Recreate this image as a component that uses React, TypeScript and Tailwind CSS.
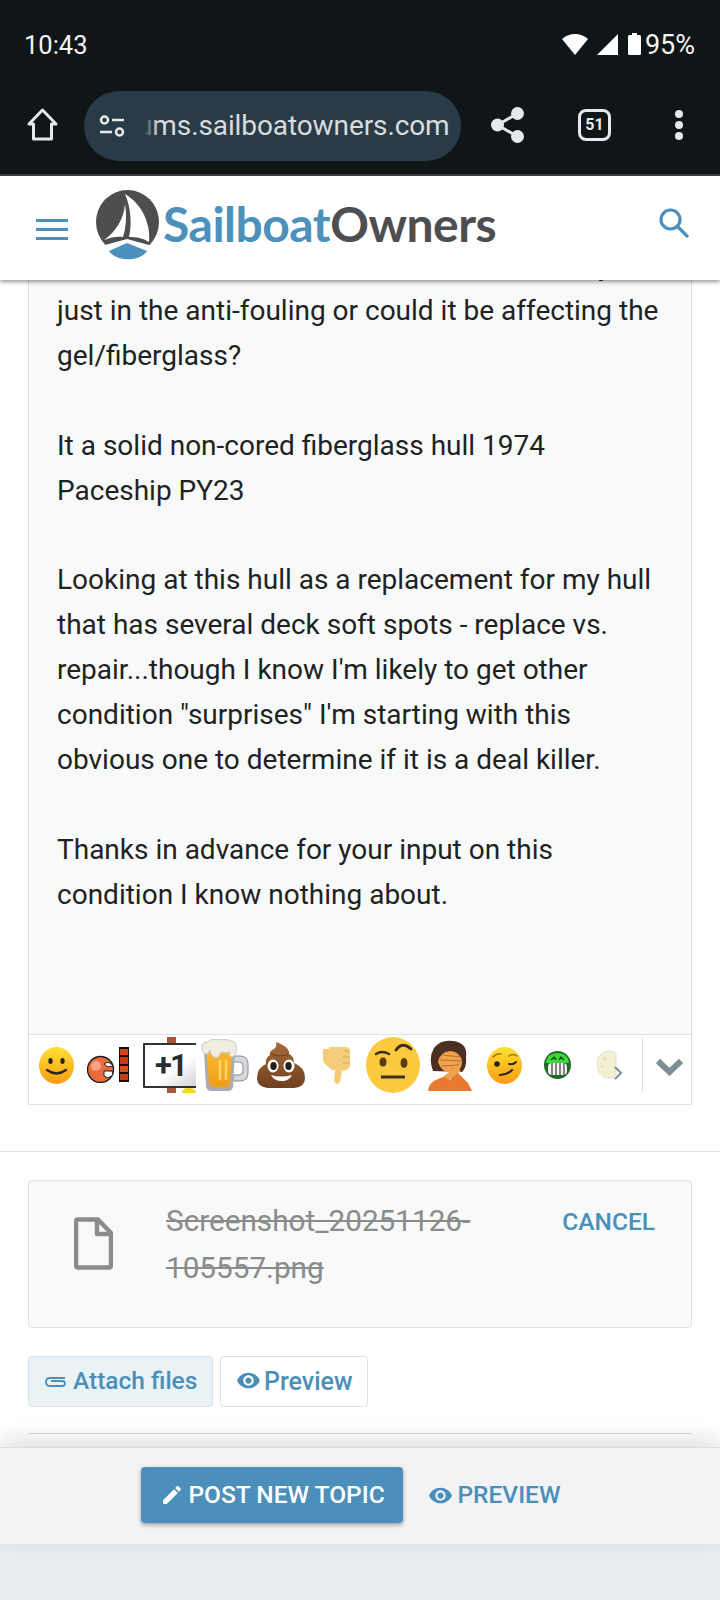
import { MdEdit, MdVisibility } from "react-icons/md";

const POST = `just in the anti-fouling or could it be affecting the
gel/fiberglass?

It a solid non-cored fiberglass hull 1974
Paceship PY23

Looking at this hull as a replacement for my hull
that has several deck soft spots - replace vs.
repair...though I know I'm likely to get other
condition "surprises" I'm starting with this
obvious one to determine if it is a deal killer.

Thanks in advance for your input on this
condition I know nothing about.`;

function StatusBar() {
  return (
    <div className="flex h-[88px] items-center pl-[24px] pr-[25px] text-[25.500px] text-[#f2f3f3]">
      <span className="mt-[2px]">10:43</span>
      <svg className="ml-auto" width="26" height="21" viewBox="0 0 26 21">
        <path d="M13 21 0 5C3 2 8 0 13 0s10 2 13 5Z" fill="#fff" />
      </svg>
      <svg className="ml-[9px]" width="21" height="21" viewBox="0 0 21 21">
        <path d="M21 0v21H0Z" fill="#fff" />
      </svg>
      <svg className="ml-[10px]" width="13" height="22" viewBox="0 0 13 22">
        <path d="M4 0h5v2h2.500q1.500 0 1.500 1.500V20.500q0 1.500-1.500 1.500h-10Q0 22 0 20.500V3.500Q0 2 1.500 2H4Z" fill="#fff" />
      </svg>
      <span className="ml-[4px] mt-[2px] text-[27px]">95%</span>
    </div>
  );
}

function BrowserBar() {
  return (
    <div className="flex h-[86px] items-start pl-[27px] text-[#e6e8ea]">
      <svg className="mt-[20px]" width="31" height="33" viewBox="0 0 31 33" fill="none" stroke="currentColor" strokeWidth="3" strokeLinejoin="round">
        <path d="M15.500 2 2 16h4.500v15h18V16H29Z" />
      </svg>
      <div className="relative ml-[26px] mt-[3px] flex h-[70px] w-[377px] items-center overflow-hidden rounded-full bg-[#2a3b48]">
        <svg className="ml-[15px] shrink-0" width="26" height="22" viewBox="0 0 26 22" fill="none" stroke="currentColor" strokeWidth="2.500">
          <circle cx="5.500" cy="5" r="3.500" />
          <circle cx="20.500" cy="17" r="3.500" />
          <path d="M13 5h12M1 17h12" />
        </svg>
        <span className="ml-[12px] whitespace-nowrap text-[28px] tracking-[-0.1px] text-[#d8dcdf]">ums.sailboatowners.com</span>
        <div className="absolute left-[52px] top-0 h-full w-[22px] bg-gradient-to-r from-[#2a3b48] from-40% to-transparent" />
      </div>
      <svg className="ml-[30px] mt-[19px]" width="34" height="36" viewBox="0 0 34 36" fill="currentColor">
        <circle cx="26.500" cy="6.500" r="6.500" />
        <circle cx="6.500" cy="18" r="6.500" />
        <circle cx="26.500" cy="29.500" r="6.500" />
        <path d="M6.500 18 26.500 6.500M6.500 18l20 11.500" stroke="currentColor" strokeWidth="3" />
      </svg>
      <div className="ml-[53px] mt-[21px] flex h-[32px] w-[33px] items-center justify-center rounded-[8px] border-[3px] border-[#e6e8ea] text-[16px] font-bold">51</div>
      <div className="ml-[64px] mt-[22px] flex flex-col gap-[3px]">
        <div className="h-[8px] w-[8px] rounded-full bg-[#e6e8ea]" />
        <div className="h-[8px] w-[8px] rounded-full bg-[#e6e8ea]" />
        <div className="h-[8px] w-[8px] rounded-full bg-[#e6e8ea]" />
      </div>
    </div>
  );
}

function Logo() {
  return (
    <svg width="64" height="71" viewBox="0 0 64 71">
      <ellipse cx="31.500" cy="32" rx="31.500" ry="32" fill="#4d4e50" />
      <path d="M0 71V58l9-3 22-6 22 6 11 3v13Z" fill="#fff" />
      <path d="M29 4C46 14 55 34 53 52 47 48 40 47 33 47 36 34 35 18 29 4Z" fill="#fff" />
      <path d="M29 14C28 28 20 42 8 50 15 47 22 46 27 47 30 38 31 26 29 14Z" fill="#fff" />
      <path d="M13 61 31 53 51 61C44 72 20 72 13 61Z" fill="#4c90bc" />
    </svg>
  );
}

function SiteHeader() {
  return (
    <div className="relative z-10 flex h-[104px] shrink-0 items-start bg-white pl-[36px] shadow-[0_2px_4px_rgba(0,0,0,0.4)]">
      <div className="mt-[43px] flex w-[32px] flex-col gap-[6px]">
        <div className="h-[3px] bg-[#4a90bb]" />
        <div className="h-[3px] bg-[#4a90bb]" />
        <div className="h-[3px] bg-[#4a90bb]" />
      </div>
      <div className="ml-[28px] mt-[14px]">
        <Logo />
      </div>
      <div className="ml-[3px] mt-[20px] whitespace-nowrap font-['Lato',sans-serif] text-[48px] font-bold leading-[56px] tracking-[-0.5px]">
        <span className="text-[#4c90bc]">Sailboat</span>
        <span className="text-[#4d4e50]">Owners</span>
      </div>
      <svg className="ml-auto mr-[31px] mt-[32px]" width="30" height="30" viewBox="0 0 30 30" fill="none" stroke="#4a90bb" strokeWidth="3.200">
        <circle cx="11.500" cy="11.500" r="9.500" />
        <path d="m18 18 11 11" />
      </svg>
    </div>
  );
}

function Smile() {
  return (
    <svg className="ml-[10px]" width="35" height="37" viewBox="0 0 35 37">
      <defs>
        <linearGradient id="yel" x1="0" y1="0" x2="0" y2="1">
          <stop offset="0" stopColor="#fee133" />
          <stop offset="1" stopColor="#fb9b12" />
        </linearGradient>
      </defs>
      <ellipse cx="17.500" cy="18.500" rx="17.500" ry="18.500" fill="url(#yel)" />
      <ellipse cx="11.500" cy="14" rx="2.200" ry="3" fill="#2b2320" />
      <ellipse cx="23.500" cy="14" rx="2.200" ry="3" fill="#2b2320" />
      <path d="M8 23q9.500 7 19 0" fill="none" stroke="#2b2320" strokeWidth="2.200" strokeLinecap="round" />
    </svg>
  );
}

function BangHead() {
  return (
    <svg className="ml-[13px]" width="42" height="36" viewBox="0 0 42 36">
      <ellipse cx="13.500" cy="22.500" rx="13" ry="13" fill="#ef6a3a" stroke="#1d1d1d" strokeWidth="1.400" />
      <ellipse cx="9" cy="19" rx="5" ry="5" fill="#f6a283" />
      <path d="M17 24h8l1 4-5 3-4-2Z" fill="#fff" stroke="#1d1d1d" />
      <path d="M17 17q5-4 9 2l-5 1Z" fill="#fff" stroke="#1d1d1d" />
      <rect x="32" y="0" width="10" height="35" fill="#1b0d06" />
      <rect x="33" y="2" width="8" height="6" fill="#d8431a" />
      <rect x="33" y="10" width="8" height="7" fill="#c73a16" />
      <rect x="33" y="19" width="8" height="6" fill="#e04a1c" />
      <rect x="33" y="27" width="8" height="6" fill="#c73a16" />
    </svg>
  );
}

function PlusOne() {
  return (
    <div className="relative ml-[14px] h-[56px] w-[53px] overflow-hidden">
      <div className="absolute left-[24px] top-0 h-full w-[9px] bg-[#a9563a]" />
      <div className="absolute bottom-[5px] left-0 flex h-[45px] w-[60px] items-center rounded-[1px] border-2 border-[#333] bg-gradient-to-br from-white from-55% to-[#cfcfcf] pl-[10px] text-[31px] font-bold leading-none tracking-[-2px] text-[#2c2c2c]">+1</div>
      <div className="absolute bottom-0 right-0 h-[5px] w-[14px] rounded-t-full bg-[#f4d928]" />
    </div>
  );
}

function Beer() {
  return (
    <svg className="ml-[5px]" width="48" height="52" viewBox="0 0 48 52">
      <defs>
        <linearGradient id="ale" x1="0" y1="0" x2="0" y2="1">
          <stop offset="0" stopColor="#fbb62f" />
          <stop offset="1" stopColor="#f09d18" />
        </linearGradient>
      </defs>
      <path d="M32 17h7q8 0 8 8v9q0 8-8 8h-7v-6h6q4 0 4-4v-5q0-4-4-4h-6Z" fill="#d4d6d9" stroke="#8a8d92" />
      <path d="M3 12h31l-2 36q-1 4-5 4H10q-4 0-5-4Z" fill="#a9adb3" />
      <path d="M6 14h25l-2 31q-1 3-4 3H12q-3 0-4-3Z" fill="url(#ale)" />
      <path d="M19 21v20M25 21v20" stroke="#fcd56a" strokeWidth="2.500" />
      <path d="M1 10Q0 3 7 3q4-4 11-2 7-2 11 1 7 0 6 7 1 8-4 9-3 0-3-5-4 2-8 0-3 8-7 5-4-2-4-7-1 5-4 4Q1 14 1 10Z" fill="#f1ede2" stroke="#c9c6bb" />
    </svg>
  );
}

function Poop() {
  return (
    <svg className="ml-[8px]" width="49" height="47" viewBox="0 0 49 47">
      <defs>
        <linearGradient id="brn" x1="0" y1="0" x2="0" y2="1">
          <stop offset="0" stopColor="#a86d3c" />
          <stop offset="1" stopColor="#703f1e" />
        </linearGradient>
      </defs>
      <path d="M19 0Q33 5 32 12q5 2 5 9 11 4 11 15 0 9-11 10H12Q0 45 0 36q0-10 9-14-1-6 4-9-1-4 4-6 3-2 2-7Z" fill="url(#brn)" />
      <path d="M14 12q9 4 18 0M9 21q2 1 4 1M37 21q-2 1-3 1" fill="none" stroke="#6d3f1e" strokeWidth="1.200" />
      <ellipse cx="16" cy="24" rx="5.500" ry="6.500" fill="#fff" />
      <ellipse cx="32" cy="24" rx="5.500" ry="6.500" fill="#fff" />
      <ellipse cx="16.500" cy="24" rx="3.200" ry="4" fill="#23201f" />
      <ellipse cx="31.500" cy="24" rx="3.200" ry="4" fill="#23201f" />
      <path d="M14 33q10 3 21 0-3 6-10 6-8 0-11-6Z" fill="#fff" />
    </svg>
  );
}

function ThumbDown() {
  return (
    <svg className="ml-[16px]" width="29" height="38" viewBox="0 0 29 38">
      <path d="M1 3h6V1h16q5 0 5 4v14q0 4-4 5l-4 1-2 11q-1 2-3 2-3-1-3-4l1-10H10L3 18 1 15Z" fill="#f5cd7a" />
      <path d="M21 5h6M21 11h7M21 17h6" stroke="#dcae5a" strokeWidth="1.200" />
    </svg>
  );
}

function Eyebrow() {
  return (
    <svg className="ml-[15px]" width="54" height="56" viewBox="0 0 54 56">
      <ellipse cx="27" cy="28" rx="27" ry="28" fill="#fdc93f" />
      <path d="M10 17q6-4 13 0" fill="none" stroke="#3c2f1e" strokeWidth="2.500" strokeLinecap="round" />
      <path d="M30 13q6-9 15-1" fill="none" stroke="#3c2f1e" strokeWidth="2.800" strokeLinecap="round" />
      <ellipse cx="17" cy="25" rx="3.500" ry="4.500" fill="#5d3c0e" />
      <ellipse cx="38" cy="26" rx="3.500" ry="5" fill="#5d3c0e" />
      <path d="M15 40h24" stroke="#3c2f1e" strokeWidth="3" />
    </svg>
  );
}

function Facepalm() {
  return (
    <svg className="ml-[8px]" width="44" height="51" viewBox="0 0 44 51">
      <path d="M5 31Q0 18 6 8 13-1 25 1q15 2 13 16 1 10-4 15Z" fill="#4a2f22" />
      <path d="M10 22Q12 12 22 11q11 1 12 11 0 8-8 11-12 1-16-11Z" fill="#f0a24e" />
      <path d="M15 15l17 2M12 20l21 1M14 26l17-1" stroke="#b4682a" strokeWidth="0.900" />
      <path d="M24 27 40 43l4 8H22Z" fill="#e8792e" />
      <path d="M0 51q1-9 10-12l10-4 8 16Z" fill="#e8792e" />
      <path d="M16 36l12-9 5 4-12 9Z" fill="#f0a24e" />
    </svg>
  );
}

function Wink() {
  return (
    <svg className="ml-[15px]" width="35" height="37" viewBox="0 0 35 37">
      <ellipse cx="17.500" cy="18.500" rx="17.500" ry="18.500" fill="url(#yel)" />
      <circle cx="10" cy="17" r="2.800" fill="#2b2320" />
      <path d="M6 10q4-4 8-3M22 9q4-3 8 0" fill="none" stroke="#a9700f" strokeWidth="1.500" strokeLinecap="round" />
      <path d="M22 17q4 1 7-2" fill="none" stroke="#2b2320" strokeWidth="2" strokeLinecap="round" />
      <path d="M13 28q7 0 12-5" fill="none" stroke="#2b2320" strokeWidth="2.200" strokeLinecap="round" />
    </svg>
  );
}

function GreenGrin() {
  return (
    <svg className="ml-[22px]" width="27" height="28" viewBox="0 0 27 28">
      <ellipse cx="13.500" cy="14" rx="13.500" ry="14" fill="#1f6b24" />
      <path d="M2 12Q3 2 13.500 2 24 2 25 12Z" fill="#3ed83a" />
      <path d="M7 9l3-3 2 3M15 9l2-3 3 3" fill="none" stroke="#14541a" strokeWidth="1.400" />
      <rect x="4" y="12" width="19" height="12" rx="4" fill="#f2f2f2" />
      <path d="M8 12v12M12 12v12M16 12v12M20 12v12" stroke="#3c3c3c" strokeWidth="1.200" />
    </svg>
  );
}

function Moon() {
  return (
    <svg className="ml-[26px]" width="26" height="30" viewBox="0 0 26 30">
      <path d="M12 1C5 1 0 7 0 14s5 14 12 14c5 0 7-3 7-3V4s-3-3-7-3Z" fill="#f4f1d2" stroke="#dcdcd6" />
      <circle cx="8" cy="9" r="2" fill="#e2dfbb" />
      <circle cx="5" cy="16" r="1.500" fill="#e2dfbb" />
      <path d="m18 17 6 6-6 6" fill="none" stroke="#7c9094" strokeWidth="2" />
    </svg>
  );
}

function EmojiBar() {
  return (
    <div className="flex h-[70px] items-start overflow-hidden border-t border-[#e0e2e2] bg-white">
      <div className="flex h-[60px] w-[613px] shrink-0 items-center">
        <Smile />
        <BangHead />
        <PlusOne />
        <Beer />
        <Poop />
        <ThumbDown />
        <Eyebrow />
        <Facepalm />
        <Wink />
        <GreenGrin />
        <Moon />
      </div>
      <div className="mt-[3px] h-[53px] border-l border-[#d9dcdc]" />
      <svg className="ml-[13px] mt-[23px]" width="27" height="18" viewBox="0 0 27 18" fill="none" stroke="#7c9094" strokeWidth="6">
        <path d="m2 3 11.500 11L25 3" />
      </svg>
    </div>
  );
}

function Attachment() {
  return (
    <div className="mx-[28px] mt-[28px] flex h-[148px] rounded-[4px] border border-[#dfe1e2] bg-[#f8f9f9]">
      <svg className="ml-[45px] mt-[36px] shrink-0" width="39" height="53" viewBox="0 0 39 53" fill="none" stroke="#8b8b8b" strokeWidth="4.500" strokeLinejoin="round">
        <path d="M4 2.500h20L37 16v32q0 2.500-2.500 2.500h-30Q2 50.500 2 48V5q0-2.500 2-2.500Z" />
        <path d="M23 3v14h13" />
      </svg>
      <div className="ml-[53px] mt-[17px] w-[340px] text-[29.700px] leading-[46.500px] text-[#8b8b8b] line-through">Screenshot_20251126-105557.png</div>
      <div className="ml-auto mr-[36px] mt-[23px] text-[24.500px] font-medium text-[#4a8fba]">CANCEL</div>
    </div>
  );
}

function EditorButtons() {
  return (
    <div className="mx-[28px] mt-[28px] flex gap-[7px] text-[24.500px] font-medium text-[#4a8fba]">
      <div className="flex h-[51px] w-[185px] items-center rounded-[4px] border border-[#dfe1e2] bg-[#ebf2f6] pl-[16px]">
        <svg width="21" height="14" viewBox="0 0 21 14" fill="none" stroke="#4a8fba" strokeWidth="1.800">
          <path d="M20 3H5Q1 3 1 7t4 4h12q3 0 3-2.500T17 6H6" />
        </svg>
        <span className="ml-[7px]">Attach files</span>
      </div>
      <div className="flex h-[51px] w-[148px] items-center rounded-[4px] border border-[#dfe1e2] bg-white pl-[15px]">
        <MdVisibility className="mb-[3px] text-[25px]" />
        <span className="ml-[3px] text-[25px]">Preview</span>
      </div>
    </div>
  );
}

function Footer() {
  return (
    <>
      <div className="relative z-10 flex h-[97px] items-start justify-center border-t border-[#dcdedf] bg-[#f2f3f5] pr-[18px] shadow-[0_-6px_22px_rgba(0,0,0,0.14)]">
        <div className="mt-[19px] flex h-[56px] w-[262px] items-center rounded-[4px] bg-[#4b8fba] pl-[19px] text-[24.500px] font-medium text-white shadow-[0_2px_4px_rgba(0,0,0,0.35)]">
          <MdEdit className="text-[24px]" />
          <span className="ml-[4px]">POST NEW TOPIC</span>
        </div>
        <div className="ml-[25px] mt-[19px] flex h-[56px] items-center text-[24.500px] font-medium text-[#4a8fba]">
          <MdVisibility className="text-[25px]" />
          <span className="ml-[4px]">PREVIEW</span>
        </div>
      </div>
      <div className="flex-1 bg-[#ebeef1]" />
    </>
  );
}

export default function App() {
  return (
    <div className="flex h-[1600px] flex-col overflow-hidden bg-white font-['Roboto',sans-serif]">
      <div className="h-[176px] shrink-0 border-b-2 border-[#3a4148] bg-[#101518]">
        <StatusBar />
        <BrowserBar />
      </div>
      <SiteHeader />
      <div className="mx-[28px] mt-[-37px] border-x border-b border-[#e0e2e2] bg-[#f8f9f9]">
        <div className="h-[791px] overflow-hidden pl-[28px] pt-[1px] text-[28px] leading-[44.900px] text-[#1f2223]">
          <p className="pl-[541px]">y</p>
          <p className="whitespace-pre-line">{POST}</p>
        </div>
        <EmojiBar />
      </div>
      <div className="mt-[46px] h-px shrink-0 bg-[#e0e2e2]" />
      <Attachment />
      <EditorButtons />
      <div className="mx-[28px] mb-[13px] mt-[26px] h-px shrink-0 bg-[#d5d7d8]" />
      <Footer />
    </div>
  );
}
